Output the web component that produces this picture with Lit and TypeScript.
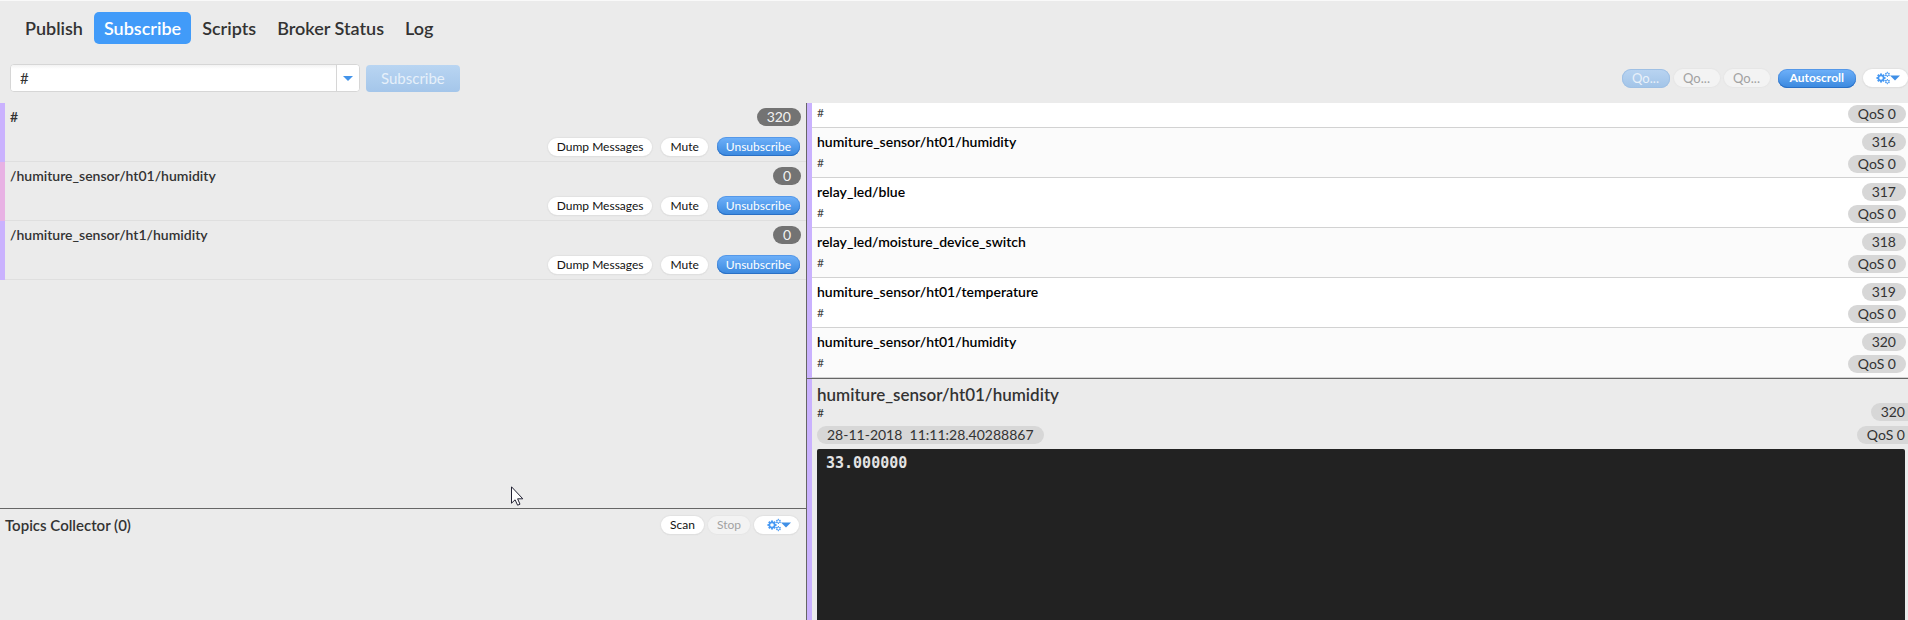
import { LitElement, html, css, svg } from "lit";
import { customElement, property } from "lit/decorators.js";

interface Subscription {
  topic: string;
  count: number;
  color: string;
}

interface Message {
  topic: string;
  id: number;
}

const FILTER = "#";
const NAV = ["Publish", "Subscribe", "Scripts", "Broker Status", "Log"];
const VIOLET = "#cab2fe";
const PINK = "#e8b2e4";

const SUBSCRIPTIONS: Subscription[] = [
  { topic: "#", count: 320, color: VIOLET },
  { topic: "/humiture_sensor/ht01/humidity", count: 0, color: PINK },
  { topic: "/humiture_sensor/ht1/humidity", count: 0, color: VIOLET },
];

const MESSAGES: Message[] = [
  { topic: "humiture_sensor/ht01/temperature", id: 315 },
  { topic: "humiture_sensor/ht01/humidity", id: 316 },
  { topic: "relay_led/blue", id: 317 },
  { topic: "relay_led/moisture_device_switch", id: 318 },
  { topic: "humiture_sensor/ht01/temperature", id: 319 },
  { topic: "humiture_sensor/ht01/humidity", id: 320 },
];

const controls = css`
  * {
    box-sizing: border-box;
  }
  button,
  input {
    font: inherit;
    color: inherit;
    margin: 0;
    border: 0;
  }
  .pill {
    height: 18px;
    padding: 0 9px;
    border-radius: 9px;
    background: #fff;
    box-shadow: 0 0 1px 1px #e2e2e2, 0 1px 1px 0 #d2d2d2;
    color: #111;
    font-size: 12px;
    line-height: 18px;
    white-space: nowrap;
  }
  .pill.faded {
    background: #f3f3f3;
    box-shadow: 0 0 1px 1px #e6e6e6;
    color: #a2a2a2;
  }
  .pill.primary {
    height: 19px;
    background: linear-gradient(#6fb1fa, #3a88de);
    box-shadow: inset 0 0 0 1px rgba(40, 110, 200, 0.35), inset 0 -1px 0 #2c72c4;
    color: #fff;
  }
  .pill.pale {
    height: 19px;
    background: linear-gradient(#b9d4f1, #a2c4e8);
    box-shadow: inset 0 0 0 1px #9fc0e4;
    color: #e9f1fa;
  }
  .badge {
    height: 18px;
    padding: 0 10px;
    border-radius: 9px;
    background: #d7d7d7;
    color: #333;
    font-size: 14px;
    line-height: 18px;
    white-space: nowrap;
  }
`;

@customElement("gear-button")
export class GearButton extends LitElement {
  static styles = [
    controls,
    css`
      :host {
        display: block;
      }
      .gear {
        display: flex;
        align-items: center;
        width: 45px;
        padding: 0 8px 0 13px;
      }
      svg {
        display: block;
        width: 24px;
        height: 14px;
      }
    `,
  ];

  private cog(cx: number, cy: number, r: number, hole: number, teeth: number) {
    const step = 360 / teeth;
    return svg`
      <circle cx=${cx} cy=${cy} r=${(r + hole) / 2} fill="none" stroke="#4799f3" stroke-width=${r - hole}></circle>
      ${Array.from({ length: teeth }, (_, i) => svg`
        <rect x=${cx - r * 0.27} y=${cy - r * 1.3} width=${r * 0.54} height=${r * 0.5}
          fill="#4799f3" transform="rotate(${i * step} ${cx} ${cy})"></rect>`)}
    `;
  }

  render() {
    return html`
      <button class="pill gear" aria-label="Settings">
        <svg viewBox="0 0 24 14" aria-hidden="true">
          ${this.cog(5, 7, 3.5, 1.8, 8)}
          ${this.cog(11.4, 3.4, 2, 1, 6)}
          ${this.cog(11.4, 10.6, 2, 1, 6)}
          <path d="M14 4.5h10l-5 5z" fill="#3f8fe6"></path>
        </svg>
      </button>
    `;
  }
}

@customElement("subscription-row")
export class SubscriptionRow extends LitElement {
  @property({ attribute: false }) item!: Subscription;

  static styles = [
    controls,
    css`
      :host {
        display: block;
      }
      .row {
        display: flex;
        flex-direction: column;
        justify-content: space-between;
        height: 59px;
        padding: 5px 5px 6px;
        border-left: 5px solid;
        background: linear-gradient(#dfdfdf, #dfdfdf) bottom / 100% 1px no-repeat;
      }
      .head {
        display: flex;
        justify-content: space-between;
      }
      .topic {
        color: #333;
        font-size: 14px;
        font-weight: 600;
        line-height: 18px;
      }
      .count {
        background: #737373;
        color: #f2f2f2;
      }
      .actions {
        display: flex;
        align-items: center;
        justify-content: flex-end;
        gap: 9px;
        padding-right: 1px;
      }
    `,
  ];

  render() {
    const { topic, count, color } = this.item;
    return html`
      <div class="row" style="border-color: ${color}">
        <div class="head">
          <span class="topic">${topic}</span>
          <span class="badge count">${count}</span>
        </div>
        <div class="actions">
          <button class="pill">Dump Messages</button>
          <button class="pill">Mute</button>
          <button class="pill primary">Unsubscribe</button>
        </div>
      </div>
    `;
  }
}

@customElement("message-row")
export class MessageRow extends LitElement {
  @property({ attribute: false }) item!: Message;

  static styles = [
    controls,
    css`
      :host {
        display: block;
        flex: none;
      }
      .row {
        display: flex;
        justify-content: space-between;
        height: 50px;
        padding: 5px 2px 0 5px;
        border-bottom: 1px solid #d2d2d2;
      }
      .text,
      .meta {
        display: flex;
        flex-direction: column;
        gap: 4px;
      }
      .meta {
        align-items: flex-end;
      }
      .topic {
        color: #000;
        font-size: 14px;
        font-weight: 600;
        line-height: 18px;
      }
      .filter {
        color: #444;
        font-size: 12px;
        line-height: 16px;
      }
    `,
  ];

  render() {
    return html`
      <div class="row">
        <div class="text">
          <span class="topic">${this.item.topic}</span>
          <span class="filter">${FILTER}</span>
        </div>
        <div class="meta">
          <span class="badge">${this.item.id}</span>
          <span class="badge">QoS 0</span>
        </div>
      </div>
    `;
  }
}

@customElement("app-root")
export class AppRoot extends LitElement {
  static styles = [
    controls,
    css`
      :host {
        display: flex;
        flex-direction: column;
        height: 100vh;
        overflow: hidden;
        border-top: 1px solid #f9f9f9;
        box-sizing: border-box;
        background: #ebebeb;
        color: #333;
        font-family: Lato, "Liberation Sans", sans-serif;
      }
      nav {
        display: flex;
        gap: 1px;
        padding: 11px 15px 0;
      }
      nav a {
        padding: 0 10px;
        border-radius: 5px;
        color: #333;
        font-size: 18px;
        font-weight: 600;
        line-height: 32px;
        text-decoration: none;
      }
      nav a.current {
        background: #419bf9;
        color: #fff;
      }
      .toolbar {
        display: flex;
        align-items: center;
        justify-content: space-between;
        height: 59px;
        padding: 9px 0 0 10px;
      }
      .subscribe,
      .filters {
        display: flex;
        align-items: center;
      }
      .combo {
        display: flex;
        width: 350px;
        height: 28px;
        margin-right: 6px;
        border: 1px solid #d6d6d6;
        border-radius: 4px;
        background: #fff;
        overflow: hidden;
      }
      .combo input {
        flex: 1;
        min-width: 0;
        padding: 0 9px;
        background: linear-gradient(#f3f3f3, #fff 4px);
        font-size: 15px;
        outline: none;
      }
      .combo button {
        display: grid;
        place-items: center;
        width: 23px;
        padding: 0;
        border-left: 1px solid #d6d6d6;
        background: #fff;
      }
      .combo svg {
        width: 10px;
        height: 5px;
      }
      .submit {
        height: 27px;
        padding: 0 15px;
        border-radius: 4px;
        background: linear-gradient(#b9d5f2, #a4c6ea);
        color: #e6f0fa;
        font-size: 15px;
      }
      .filters {
        gap: 4px;
      }
      .filters .primary {
        margin: 0 3px 0 4px;
        padding: 0 12px;
        font-weight: 700;
      }
      .pill.qos {
        width: 46px;
        padding: 0 8px;
        font-size: 13px;
      }
      .pill.qos.pale {
        width: 48px;
      }
      main {
        flex: 1;
        min-height: 0;
        display: grid;
        grid-template-columns: minmax(0, 806fr) minmax(0, 1102fr);
      }
      .left,
      .right {
        display: grid;
        min-height: 0;
      }
      .left {
        grid-template-rows: minmax(0, 405fr) minmax(0, 112fr);
      }
      .right {
        grid-template-rows: minmax(0, 275fr) minmax(0, 242fr);
        border-left: 1px solid #666;
      }
      .subscriptions {
        overflow: hidden;
      }
      .collector {
        display: flex;
        align-items: flex-start;
        justify-content: space-between;
        padding: 7px 7px 0 5px;
        border-top: 1px solid #666;
      }
      .collector h2 {
        margin: 0;
        font-size: 15px;
        font-weight: 600;
        line-height: 18px;
      }
      .collector .tools {
        display: flex;
        gap: 4px;
      }
      .messages {
        display: flex;
        flex-direction: column;
        justify-content: flex-end;
        overflow: hidden;
        border-left: 5px solid;
      }
      .messages message-row {
        background: #fff;
      }
      .messages message-row:nth-child(even) {
        background: #fbfbfb;
      }
      .detail {
        display: flex;
        border-top: 1px solid #666;
        min-height: 0;
      }
      .stripe {
        flex: none;
        width: 5px;
      }
      .content {
        flex: 1;
        display: flex;
        flex-direction: column;
        min-width: 0;
        padding: 8px 3px 0 5px;
      }
      .content h1 {
        margin: 0;
        font-size: 17px;
        font-weight: 600;
        line-height: 16px;
      }
      .line {
        display: flex;
        align-items: center;
        justify-content: space-between;
        margin: 0 -3px 5px 0;
        height: 18px;
        font-size: 12px;
      }
      .line .edge {
        padding-right: 3px;
        border-radius: 9px 0 0 9px;
      }
      .payload {
        flex: 1;
        margin: 0;
        padding: 5px 9px;
        border-radius: 2px 2px 0 0;
        background: #222;
        color: #e4e4e4;
        font: 700 15px/18px "DejaVu Sans Mono", "Liberation Mono", monospace;
      }
      .date {
        white-space: pre;
      }
      .cursor {
        position: absolute;
        left: 511px;
        top: 486px;
        width: 13px;
        height: 20px;
        pointer-events: none;
      }
    `,
  ];

  render() {
    return html`
      <nav>
        ${NAV.map((n) => html`<a href="#" class=${n === "Subscribe" ? "current" : ""}>${n}</a>`)}
      </nav>
      <div class="toolbar">
        <div class="subscribe">
          <div class="combo">
            <input aria-label="Topic" .value=${FILTER} />
            <button aria-label="Recent topics">
              <svg viewBox="0 0 10 5" aria-hidden="true"><path d="M0 0h10l-5 5z" fill="#4293ea"></path></svg>
            </button>
          </div>
          <button class="submit">Subscribe</button>
        </div>
        <div class="filters">
          <button class="pill pale qos">Qo...</button>
          <button class="pill faded qos">Qo...</button>
          <button class="pill faded qos">Qo...</button>
          <button class="pill primary">Autoscroll</button>
          <gear-button></gear-button>
        </div>
      </div>
      <main>
        <div class="left">
          <section class="subscriptions">
            ${SUBSCRIPTIONS.map((s) => html`<subscription-row .item=${s}></subscription-row>`)}
          </section>
          <section class="collector">
            <h2>Topics Collector (0)</h2>
            <div class="tools">
              <button class="pill">Scan</button>
              <button class="pill faded">Stop</button>
              <gear-button></gear-button>
            </div>
          </section>
        </div>
        <div class="right">
          <section class="messages" style="border-color: ${VIOLET}">
            ${MESSAGES.map((m) => html`<message-row .item=${m}></message-row>`)}
          </section>
          <section class="detail">
            <div class="stripe" style="background: ${VIOLET}"></div>
            <div class="content">
              <h1>humiture_sensor/ht01/humidity</h1>
              <div class="line"><span>${FILTER}</span><span class="badge edge">320</span></div>
              <div class="line">
                <span class="badge date">28-11-2018  11:11:28.40288867</span>
                <span class="badge edge">QoS 0</span>
              </div>
              <pre class="payload">33.000000</pre>
            </div>
          </section>
        </div>
      </main>
      <svg class="cursor" viewBox="0 0 13 20" aria-hidden="true">
        <path d="M.5.8v16.4l3.6-3.4 2.5 5.4 2.4-1-2.4-5.4h5.2z" fill="#fff" stroke="#223" stroke-width="1"></path>
      </svg>
    `;
  }
}
